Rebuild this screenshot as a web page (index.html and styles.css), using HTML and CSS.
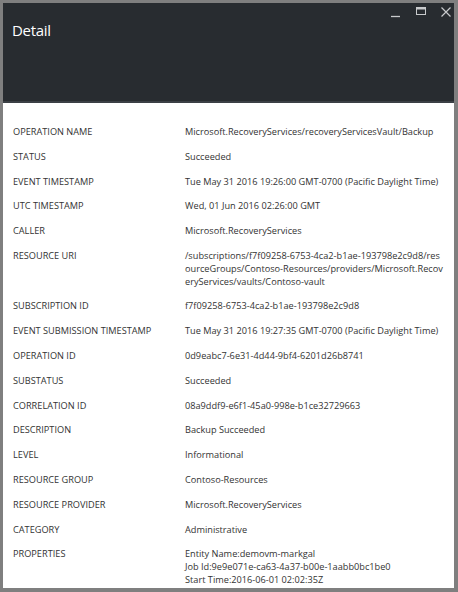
FILE: index.html
```html
<!DOCTYPE html>
<html>
<head>
<meta charset="utf-8">
<link rel="stylesheet" href="styles.css">
</head>
<body>
<div class="window">
  <header class="head">
    <div class="controls">
      <svg class="ctl" width="12" height="12" viewBox="0 0 12 12"><path d="M1 10.5h9" stroke="#c8cacc" stroke-width="1.3" fill="none"/></svg>
      <svg class="ctl" width="12" height="12" viewBox="0 0 12 12"><rect x="1.5" y="1.5" width="9" height="7" stroke="#c8cacc" stroke-width="1" fill="none"/><path d="M1.5 2.5h9" stroke="#c8cacc" stroke-width="2"/></svg>
      <svg class="ctl" width="12" height="12" viewBox="0 0 12 12"><path d="M1.5 1.5l9 9M10.5 1.5l-9 9" stroke="#c8cacc" stroke-width="1.2" fill="none"/></svg>
    </div>
    <h1 class="title">Detail</h1>
  </header>
  <dl class="props">
    <div class="row"><dt>OPERATION NAME</dt><dd>Microsoft.RecoveryServices/recoveryServicesVault/Backup</dd></div>
    <div class="row"><dt>STATUS</dt><dd>Succeeded</dd></div>
    <div class="row"><dt>EVENT TIMESTAMP</dt><dd>Tue May 31 2016 19:26:00 GMT-0700 (Pacific Daylight Time)</dd></div>
    <div class="row"><dt>UTC TIMESTAMP</dt><dd>Wed, 01 Jun 2016 02:26:00 GMT</dd></div>
    <div class="row"><dt>CALLER</dt><dd>Microsoft.RecoveryServices</dd></div>
    <div class="row"><dt>RESOURCE URI</dt><dd class="wrap"><span class="line">/subscriptions/f7f09258-6753-4ca2-b1ae-193798e2c9d8/res</span><span class="line">ourceGroups/Contoso-Resources/providers/Microsoft.Recov</span><span class="line">eryServices/vaults/Contoso-vault</span></dd></div>
    <div class="row"><dt>SUBSCRIPTION ID</dt><dd>f7f09258-6753-4ca2-b1ae-193798e2c9d8</dd></div>
    <div class="row"><dt>EVENT SUBMISSION TIMESTAMP</dt><dd>Tue May 31 2016 19:27:35 GMT-0700 (Pacific Daylight Time)</dd></div>
    <div class="row"><dt>OPERATION ID</dt><dd>0d9eabc7-6e31-4d44-9bf4-6201d26b8741</dd></div>
    <div class="row"><dt>SUBSTATUS</dt><dd>Succeeded</dd></div>
    <div class="row"><dt>CORRELATION ID</dt><dd>08a9ddf9-e6f1-45a0-998e-b1ce32729663</dd></div>
    <div class="row"><dt>DESCRIPTION</dt><dd>Backup Succeeded</dd></div>
    <div class="row"><dt>LEVEL</dt><dd>Informational</dd></div>
    <div class="row"><dt>RESOURCE GROUP</dt><dd>Contoso-Resources</dd></div>
    <div class="row"><dt>RESOURCE PROVIDER</dt><dd>Microsoft.RecoveryServices</dd></div>
    <div class="row"><dt>CATEGORY</dt><dd>Administrative</dd></div>
    <div class="row"><dt>PROPERTIES</dt><dd><span class="line">Entity Name:demovm-markgal</span><span class="line">Job Id:9e9e071e-ca63-4a37-b00e-1aabb0bc1be0</span><span class="line">Start Time:2016-06-01 02:02:35Z</span></dd></div>
  </dl>
</div>
</body>
</html>
```

FILE: styles.css
```css
html, body {
  margin: 0;
  padding: 0;
  background: #ffffff;
}
.window {
  box-sizing: border-box;
  width: 458px;
  height: 592px;
  border-style: solid;
  border-color: #7f7f7f;
  border-width: 3px 4px 4px 3px;
  background: #ffffff;
  overflow: hidden;
  font-family: "Open Sans", "Noto Sans", sans-serif;
}
.head {
  position: relative;
  box-sizing: border-box;
  height: 100px;
  background: #282c30;
  border-bottom: 2px solid #3b4045;
  padding: 17px 0 0 9px;
}
.title {
  margin: 0;
  font-size: 15px;
  font-weight: 400;
  color: #ffffff;
  line-height: 20px;
  letter-spacing: -0.3px;
}
.controls {
  position: absolute;
  top: 3px;
  right: 2px;
  display: flex;
  gap: 13px;
}
.ctl {
  display: block;
}
.props {
  margin: 0;
  padding: 17px 0 0 10px;
}
.row {
  display: flex;
  padding: 6px 0;
  font-size: 9.2px;
  line-height: 12.8px;
  color: #333333;
}
dt {
  width: 172px;
  flex: none;
}
dd {
  margin: 0;
  width: 262px;
  flex: none;
}
.wrap {
  word-break: break-all;
}
.line {
  display: block;
  white-space: nowrap;
}
```
